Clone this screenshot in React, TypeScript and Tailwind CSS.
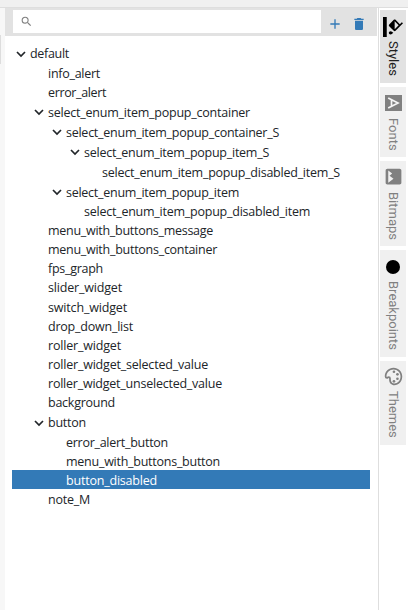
import React from "react";
import { MdDelete, MdImage, MdSearch, MdAdd, MdOutlinePalette } from "react-icons/md";

type Row = { text: string; pad: string; h: string; width: number; open?: boolean; selected?: boolean };

const rows: Row[] = [
  { text: "default", pad: "pl-[2px]", h: "h-[21px]", width: 39, open: true },
  { text: "info_alert", pad: "pl-[20px]", h: "h-[19px]", width: 52 },
  { text: "error_alert", pad: "pl-[20px]", h: "h-[19px]", width: 58 },
  { text: "select_enum_item_popup_container", pad: "pl-[20px]", h: "h-[20px]", width: 202, open: true },
  { text: "select_enum_item_popup_container_S", pad: "pl-[38px]", h: "h-[20px]", width: 213, open: true },
  { text: "select_enum_item_popup_item_S", pad: "pl-[56px]", h: "h-[20px]", width: 185, open: true },
  { text: "select_enum_item_popup_disabled_item_S", pad: "pl-[74px]", h: "h-[20px]", width: 238 },
  { text: "select_enum_item_popup_item", pad: "pl-[38px]", h: "h-[20px]", width: 173, open: true },
  { text: "select_enum_item_popup_disabled_item", pad: "pl-[56px]", h: "h-[19px]", width: 226 },
  { text: "menu_with_buttons_message", pad: "pl-[20px]", h: "h-[19px]", width: 165 },
  { text: "menu_with_buttons_container", pad: "pl-[20px]", h: "h-[19px]", width: 169 },
  { text: "fps_graph", pad: "pl-[20px]", h: "h-[19px]", width: 55 },
  { text: "slider_widget", pad: "pl-[20px]", h: "h-[19px]", width: 74 },
  { text: "switch_widget", pad: "pl-[20px]", h: "h-[20px]", width: 79 },
  { text: "drop_down_list", pad: "pl-[20px]", h: "h-[19px]", width: 85 },
  { text: "roller_widget", pad: "pl-[20px]", h: "h-[19px]", width: 73 },
  { text: "roller_widget_selected_value", pad: "pl-[20px]", h: "h-[19px]", width: 160 },
  { text: "roller_widget_unselected_value", pad: "pl-[20px]", h: "h-[19px]", width: 174 },
  { text: "background", pad: "pl-[20px]", h: "h-[19px]", width: 67 },
  { text: "button", pad: "pl-[20px]", h: "h-[21px]", width: 38, open: true },
  { text: "error_alert_button", pad: "pl-[38px]", h: "h-[19px]", width: 102 },
  { text: "menu_with_buttons_button", pad: "pl-[38px]", h: "h-[18px]", width: 154 },
  { text: "button_disabled", pad: "pl-[38px] pt-[2px]", h: "h-[19px]", width: 91, selected: true },
  { text: "note_M", pad: "pl-[20px] pt-[2px]", h: "h-[19px]", width: 42 },
];

// Spreads a label over a fixed width by adjusting its tracking.
function Label({ text, width }: { text: string; width: number }) {
  const ref = React.useRef<HTMLSpanElement>(null);
  const [spacing, setSpacing] = React.useState(0);
  React.useLayoutEffect(() => {
    const el = ref.current;
    if (!el) return;
    el.style.letterSpacing = "0px";
    const value = (width - el.getBoundingClientRect().width) / text.length;
    el.style.letterSpacing = `${value}px`;
    setSpacing(value);
  }, [text, width]);
  return (
    <span ref={ref} className="whitespace-nowrap" style={{ letterSpacing: spacing }}>
      {text}
    </span>
  );
}

const Chevron = () => (
  <svg className="h-[10px] w-[10px]" viewBox="0 0 10 10" fill="none" stroke="currentColor" strokeWidth="1.7">
    <path d="M1 3l4 4 4-4" />
  </svg>
);

const tabs = [
  { name: "Styles", h: "h-[73px]", len: "h-[34px]", pad: "pt-[7px] gap-[4px]", color: "bg-[#e2e2e2] text-[#202020]",
    icon: (
      <svg className="h-5 w-5 rotate-90" viewBox="0 0 24 24" fill="#000">
        <path d="M16.56 8.94L7.62 0 6.21 1.41l2.38 2.38-5.15 5.15c-.59.59-.59 1.54 0 2.12l5.5 5.5c.29.29.68.44 1.06.44s.77-.15 1.06-.44l5.5-5.5c.59-.58.59-1.53 0-2.12zM5.21 10L10 5.21 14.79 10H5.21zM19 11.5s-2 2.17-2 3.5c0 1.1.9 2 2 2s2-.9 2-2c0-1.33-2-3.500-2-3.500z" />
        <path d="M0 19.500h24V24H0z" />
      </svg>
    ) },
  { name: "Fonts", h: "h-[70px]", len: "h-[32px]", pad: "pt-[8px] gap-[7px]", color: "bg-[#f0f0f0] text-[#808080]",
    icon: (
      <svg className="h-4 w-[17px]" viewBox="0 0 17 16">
        <path fill="#808080" d="M0 0h17v16H0z" />
        <path fill="none" stroke="#f5f5f5" strokeWidth="1.7" d="M3.200 3l9.800 5-9.800 5M6.500 5v6" />
      </svg>
    ) },
  { name: "Bitmaps", h: "h-[85px]", len: "h-[48px]", pad: "pt-[5px] gap-[5px]", color: "bg-[#f0f0f0] text-[#808080]", icon: <MdImage className="h-[21px] w-[21px] rotate-90" /> },
  { name: "Breakpoints", h: "h-[107px]", len: "h-[70px]", pad: "pt-[10px] gap-[7px]", color: "bg-[#f0f0f0] text-[#808080]", icon: <span className="h-[14px] w-[14px] rounded-full bg-black" /> },
  { name: "Themes", h: "h-[84px]", len: "h-[48px]", pad: "pt-[5px] gap-[4px]", color: "bg-[#f0f0f0] text-[#808080]", icon: <MdOutlinePalette className="h-[21px] w-[21px] rotate-90" /> },
];

export default function App() {
  return (
    <div className="flex h-[610px] w-[408px] flex-col overflow-hidden bg-white">
      <div className="h-2 shrink-0 border-b border-[#dedede] bg-[#f0f0f0]" />
      <div className="flex min-h-0 flex-1">
        <aside className="w-[5px] shrink-0 bg-[#f7f7f7] pt-[27px]">
          <div className="h-[29px] w-px bg-[#dddddd]" />
        </aside>
        <main className="flex w-[372px] shrink-0 flex-col">
          <div className="flex h-7 shrink-0 items-start bg-[#e2e2e2] pl-2 pt-[2px]">
            <div className="flex h-[23px] w-[308px] items-center bg-white pl-[7px]">
              <MdSearch className="h-[13px] w-[13px] text-[#808080]" />
            </div>
            <MdAdd className="ml-[6px] mt-[6px] h-4 w-4 text-[#337ab7]" />
            <MdDelete className="ml-[8px] mt-[6px] h-4 w-4 text-[#337ab7]" />
          </div>
          <div className="ml-[7px] mr-[7px] mt-[7px] font-['Open_Sans','Noto_Sans',sans-serif] text-[12.5px] leading-[19px] text-[#212529]">
            {rows.map((r) => (
              <div key={r.text} className={`flex items-center ${r.h} ${r.pad} ${r.selected ? "bg-[#337ab7] text-white" : ""}`}>
                <span className="flex w-4 shrink-0 items-center pl-[2px]">{r.open && <Chevron />}</span>
                <Label text={r.text} width={r.width} />
              </div>
            ))}
          </div>
        </main>
        <nav className="ml-px flex w-[30px] flex-col gap-1 border-l border-[#dedede] pl-px pr-[2px] pt-[2px] font-['Roboto',sans-serif] text-[13px]">
          {tabs.map((t) => (
            <div key={t.name} className={`flex w-[26px] shrink-0 flex-col items-center ${t.h} ${t.pad} ${t.color}`}>
              {t.icon}
              <span className={`whitespace-nowrap leading-4 [writing-mode:vertical-rl] ${t.len}`}>{t.name}</span>
            </div>
          ))}
        </nav>
      </div>
    </div>
  );
}
